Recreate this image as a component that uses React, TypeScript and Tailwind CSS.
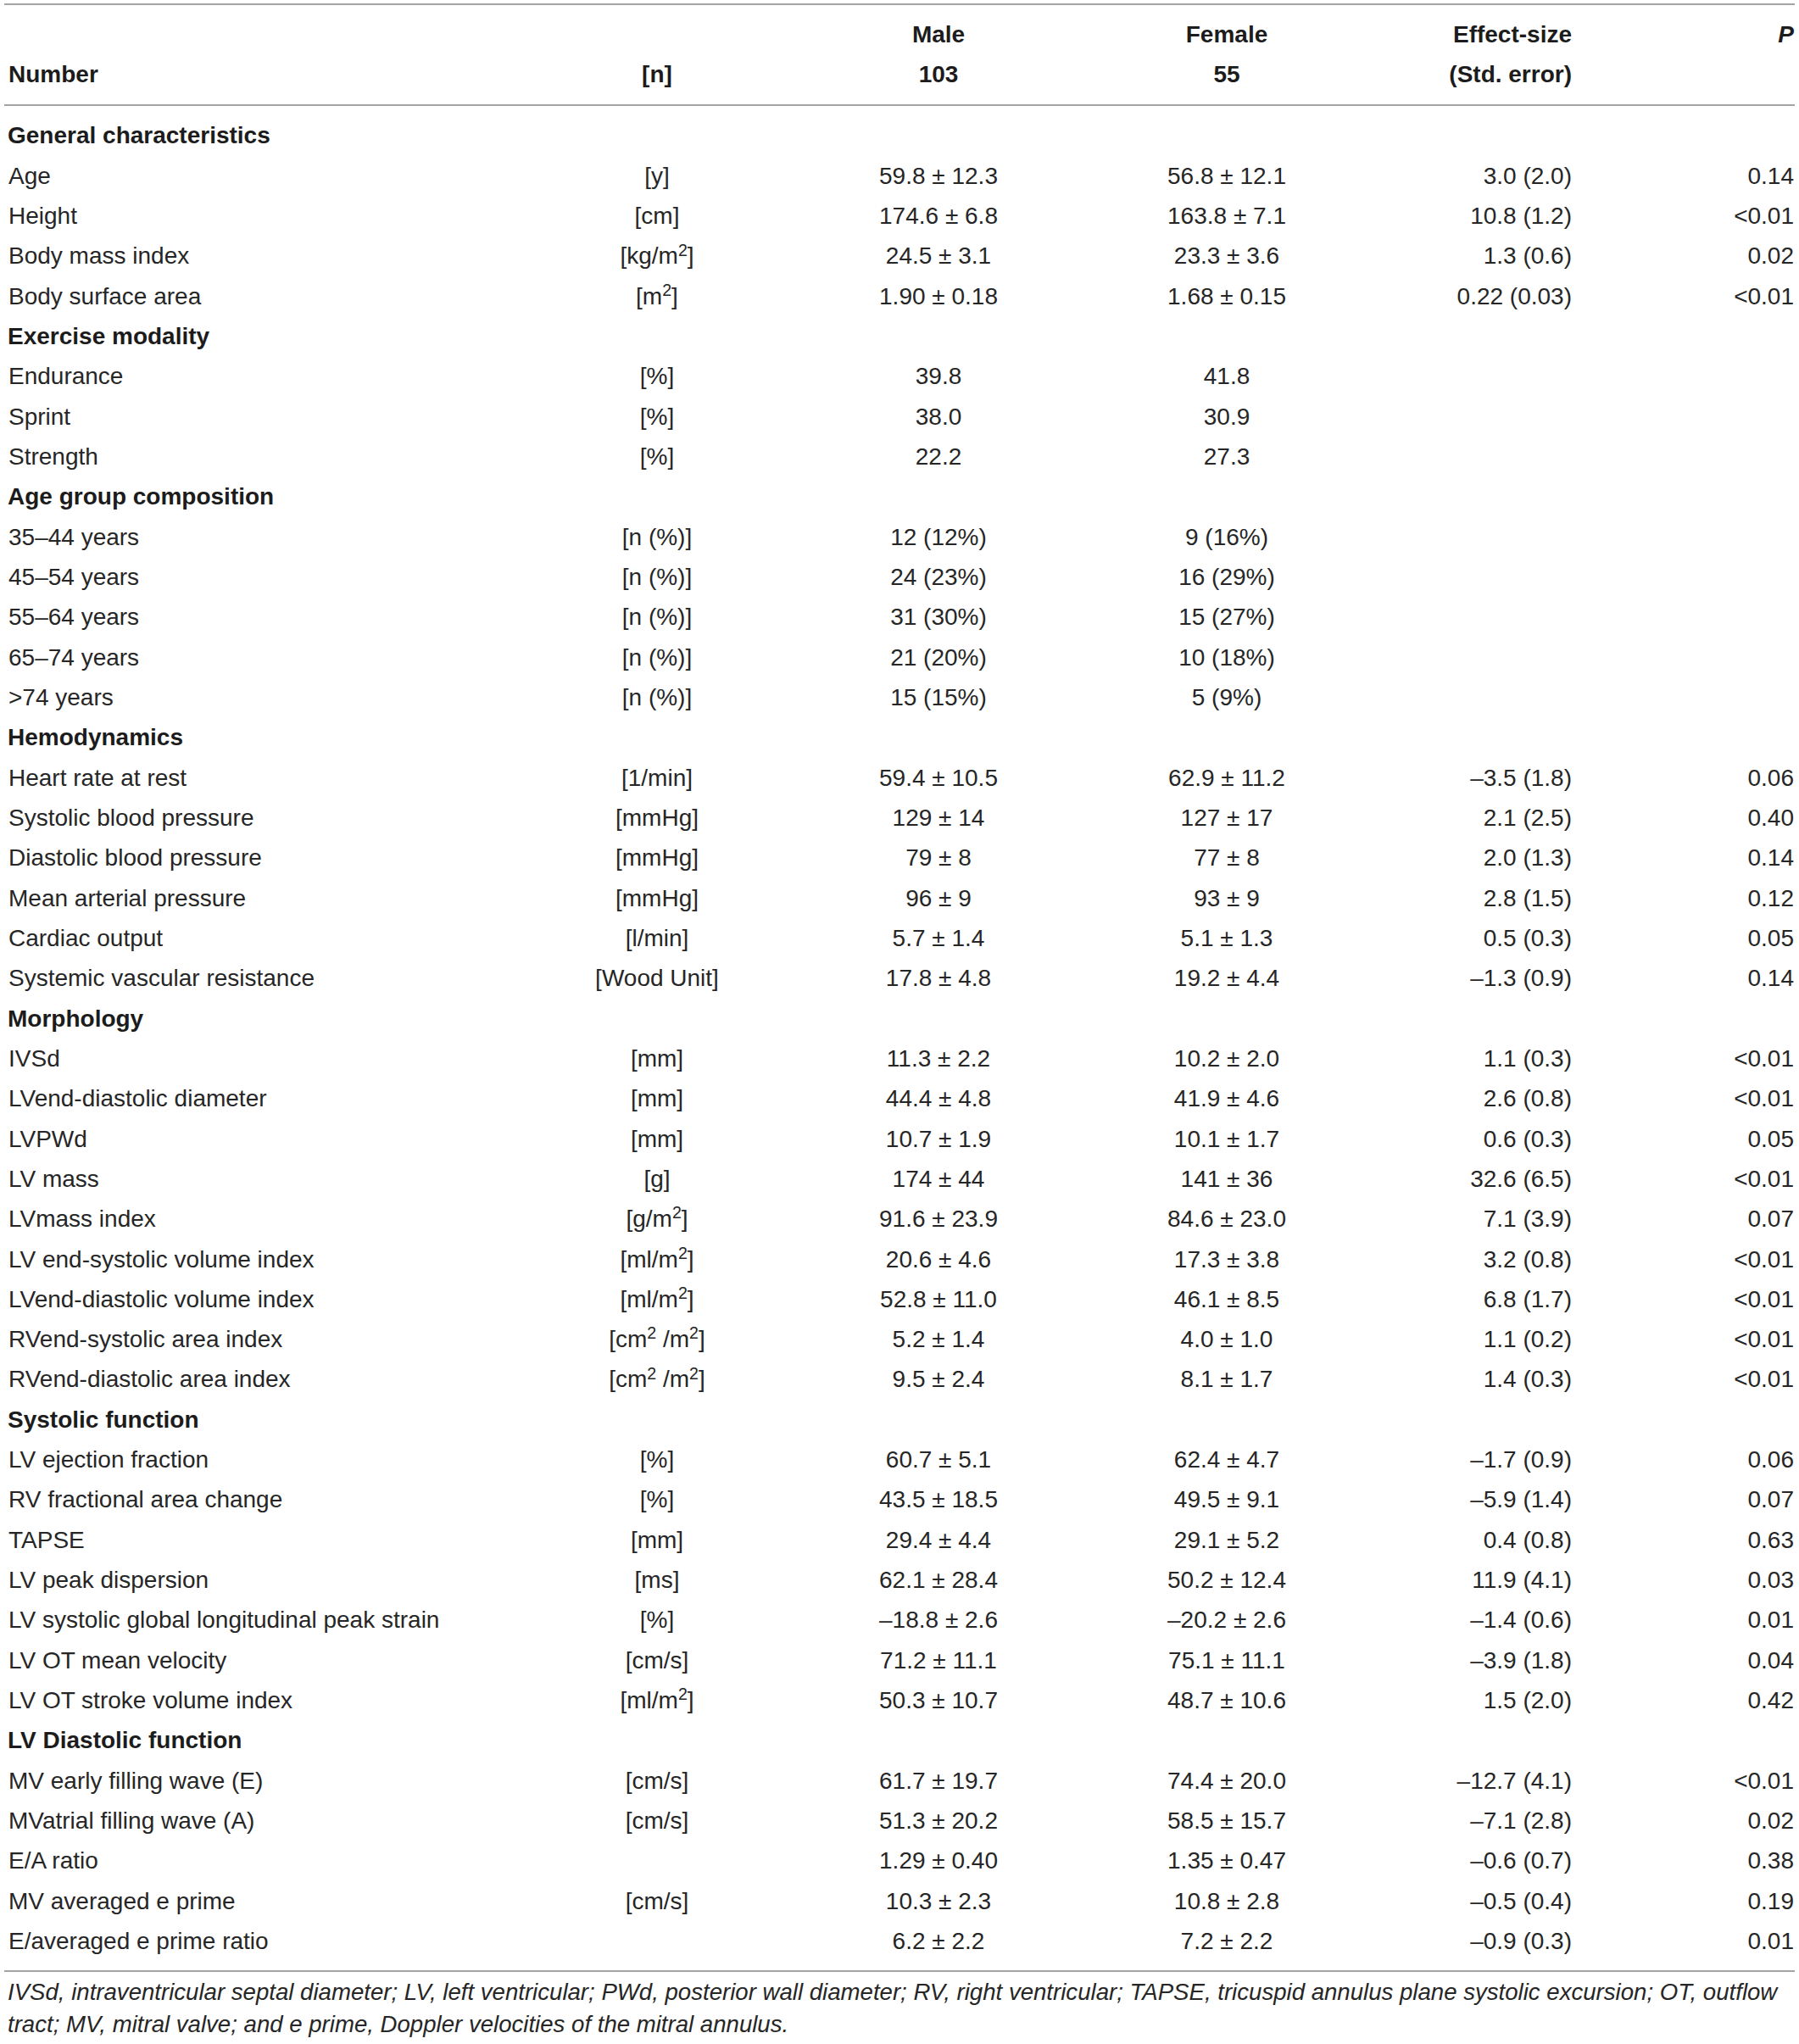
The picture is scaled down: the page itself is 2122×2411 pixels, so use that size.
import type { ReactNode } from 'react';

type Row =
  | { section: string }
  | { label: string; unit?: ReactNode; male: string; female: string; eff?: string; p?: string };

const sq = <sup className="text-[0.7em]">2</sup>;

const rows: Row[] = [
  { section: 'General characteristics' },
  { label: 'Age', unit: '[y]', male: '59.8 ± 12.3', female: '56.8 ± 12.1', eff: '3.0 (2.0)', p: '0.14' },
  { label: 'Height', unit: '[cm]', male: '174.6 ± 6.8', female: '163.8 ± 7.1', eff: '10.8 (1.2)', p: '<0.01' },
  { label: 'Body mass index', unit: <>[kg/m{sq}]</>, male: '24.5 ± 3.1', female: '23.3 ± 3.6', eff: '1.3 (0.6)', p: '0.02' },
  { label: 'Body surface area', unit: <>[m{sq}]</>, male: '1.90 ± 0.18', female: '1.68 ± 0.15', eff: '0.22 (0.03)', p: '<0.01' },
  { section: 'Exercise modality' },
  { label: 'Endurance', unit: '[%]', male: '39.8', female: '41.8' },
  { label: 'Sprint', unit: '[%]', male: '38.0', female: '30.9' },
  { label: 'Strength', unit: '[%]', male: '22.2', female: '27.3' },
  { section: 'Age group composition' },
  { label: '35–44 years', unit: '[n (%)]', male: '12 (12%)', female: '9 (16%)' },
  { label: '45–54 years', unit: '[n (%)]', male: '24 (23%)', female: '16 (29%)' },
  { label: '55–64 years', unit: '[n (%)]', male: '31 (30%)', female: '15 (27%)' },
  { label: '65–74 years', unit: '[n (%)]', male: '21 (20%)', female: '10 (18%)' },
  { label: '>74 years', unit: '[n (%)]', male: '15 (15%)', female: '5 (9%)' },
  { section: 'Hemodynamics' },
  { label: 'Heart rate at rest', unit: '[1/min]', male: '59.4 ± 10.5', female: '62.9 ± 11.2', eff: '–3.5 (1.8)', p: '0.06' },
  { label: 'Systolic blood pressure', unit: '[mmHg]', male: '129 ± 14', female: '127 ± 17', eff: '2.1 (2.5)', p: '0.40' },
  { label: 'Diastolic blood pressure', unit: '[mmHg]', male: '79 ± 8', female: '77 ± 8', eff: '2.0 (1.3)', p: '0.14' },
  { label: 'Mean arterial pressure', unit: '[mmHg]', male: '96 ± 9', female: '93 ± 9', eff: '2.8 (1.5)', p: '0.12' },
  { label: 'Cardiac output', unit: '[l/min]', male: '5.7 ± 1.4', female: '5.1 ± 1.3', eff: '0.5 (0.3)', p: '0.05' },
  { label: 'Systemic vascular resistance', unit: '[Wood Unit]', male: '17.8 ± 4.8', female: '19.2 ± 4.4', eff: '–1.3 (0.9)', p: '0.14' },
  { section: 'Morphology' },
  { label: 'IVSd', unit: '[mm]', male: '11.3 ± 2.2', female: '10.2 ± 2.0', eff: '1.1 (0.3)', p: '<0.01' },
  { label: 'LVend-diastolic diameter', unit: '[mm]', male: '44.4 ± 4.8', female: '41.9 ± 4.6', eff: '2.6 (0.8)', p: '<0.01' },
  { label: 'LVPWd', unit: '[mm]', male: '10.7 ± 1.9', female: '10.1 ± 1.7', eff: '0.6 (0.3)', p: '0.05' },
  { label: 'LV mass', unit: '[g]', male: '174 ± 44', female: '141 ± 36', eff: '32.6 (6.5)', p: '<0.01' },
  { label: 'LVmass index', unit: <>[g/m{sq}]</>, male: '91.6 ± 23.9', female: '84.6 ± 23.0', eff: '7.1 (3.9)', p: '0.07' },
  { label: 'LV end-systolic volume index', unit: <>[ml/m{sq}]</>, male: '20.6 ± 4.6', female: '17.3 ± 3.8', eff: '3.2 (0.8)', p: '<0.01' },
  { label: 'LVend-diastolic volume index', unit: <>[ml/m{sq}]</>, male: '52.8 ± 11.0', female: '46.1 ± 8.5', eff: '6.8 (1.7)', p: '<0.01' },
  { label: 'RVend-systolic area index', unit: <>[cm{sq} /m{sq}]</>, male: '5.2 ± 1.4', female: '4.0 ± 1.0', eff: '1.1 (0.2)', p: '<0.01' },
  { label: 'RVend-diastolic area index', unit: <>[cm{sq} /m{sq}]</>, male: '9.5 ± 2.4', female: '8.1 ± 1.7', eff: '1.4 (0.3)', p: '<0.01' },
  { section: 'Systolic function' },
  { label: 'LV ejection fraction', unit: '[%]', male: '60.7 ± 5.1', female: '62.4 ± 4.7', eff: '–1.7 (0.9)', p: '0.06' },
  { label: 'RV fractional area change', unit: '[%]', male: '43.5 ± 18.5', female: '49.5 ± 9.1', eff: '–5.9 (1.4)', p: '0.07' },
  { label: 'TAPSE', unit: '[mm]', male: '29.4 ± 4.4', female: '29.1 ± 5.2', eff: '0.4 (0.8)', p: '0.63' },
  { label: 'LV peak dispersion', unit: '[ms]', male: '62.1 ± 28.4', female: '50.2 ± 12.4', eff: '11.9 (4.1)', p: '0.03' },
  { label: 'LV systolic global longitudinal peak strain', unit: '[%]', male: '–18.8 ± 2.6', female: '–20.2 ± 2.6', eff: '–1.4 (0.6)', p: '0.01' },
  { label: 'LV OT mean velocity', unit: '[cm/s]', male: '71.2 ± 11.1', female: '75.1 ± 11.1', eff: '–3.9 (1.8)', p: '0.04' },
  { label: 'LV OT stroke volume index', unit: <>[ml/m{sq}]</>, male: '50.3 ± 10.7', female: '48.7 ± 10.6', eff: '1.5 (2.0)', p: '0.42' },
  { section: 'LV Diastolic function' },
  { label: 'MV early filling wave (E)', unit: '[cm/s]', male: '61.7 ± 19.7', female: '74.4 ± 20.0', eff: '–12.7 (4.1)', p: '<0.01' },
  { label: 'MVatrial filling wave (A)', unit: '[cm/s]', male: '51.3 ± 20.2', female: '58.5 ± 15.7', eff: '–7.1 (2.8)', p: '0.02' },
  { label: 'E/A ratio', male: '1.29 ± 0.40', female: '1.35 ± 0.47', eff: '–0.6 (0.7)', p: '0.38' },
  { label: 'MV averaged e prime', unit: '[cm/s]', male: '10.3 ± 2.3', female: '10.8 ± 2.8', eff: '–0.5 (0.4)', p: '0.19' },
  { label: 'E/averaged e prime ratio', male: '6.2 ± 2.2', female: '7.2 ± 2.2', eff: '–0.9 (0.3)', p: '0.01' },
];

const grid = 'grid grid-cols-[595px_350px_314px_366px_224px_263px] items-center';

export default function App() {
  return (
    <div className="min-h-screen bg-white px-[5px] pt-[4px] font-['Liberation_Sans',Arial,sans-serif] text-[28px] text-[#262626]">
      <div className="w-[2112px]">
        <div className="border-y-2 border-[#a3a3a3] pt-[11px] pb-[11px] font-bold text-[#1c1c1c]">
          <div className={`${grid} h-[47.33px]`}>
            <div />
            <div />
            <div className="text-center">Male</div>
            <div className="text-center">Female</div>
            <div className="text-right">Effect-size</div>
            <div className="pr-px text-right italic">P</div>
          </div>
          <div className={`${grid} h-[47.33px]`}>
            <div className="pl-[5px]">Number</div>
            <div className="text-center">[n]</div>
            <div className="text-center">103</div>
            <div className="text-center">55</div>
            <div className="text-right">(Std. error)</div>
            <div />
          </div>
        </div>

        <div className="border-b-2 border-[#a3a3a3] pt-[12px] pb-[10px]">
          {rows.map((r, i) =>
            'section' in r ? (
              <div key={i} className="flex h-[47.33px] items-center pl-[4px] font-bold text-[#1c1c1c]">
                {r.section}
              </div>
            ) : (
              <div key={i} className={`${grid} h-[47.33px]`}>
                <div className="pl-[5px]">{r.label}</div>
                <div className="text-center">{r.unit}</div>
                <div className="text-center">{r.male}</div>
                <div className="text-center">{r.female}</div>
                <div className="text-right">{r.eff}</div>
                <div className="pr-px text-right">{r.p}</div>
              </div>
            )
          )}
        </div>

        <p className="pt-[5px] pl-[4px] text-[27.6px] leading-[38px] italic">
          IVSd, intraventricular septal diameter; LV, left ventricular; PWd, posterior wall diameter; RV, right
          ventricular; TAPSE, tricuspid annulus plane systolic excursion; OT, outflow tract; MV, mitral valve; and e
          prime, Doppler velocities of the mitral annulus.
        </p>
      </div>
    </div>
  );
}
